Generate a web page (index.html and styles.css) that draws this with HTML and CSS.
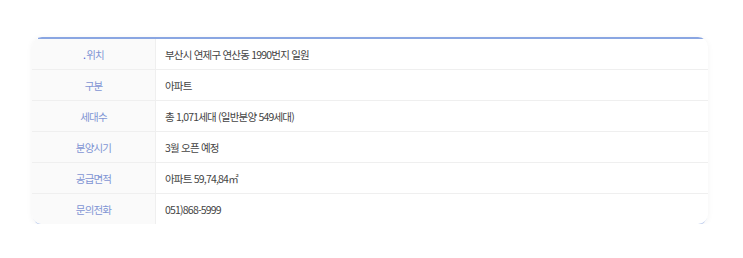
FILE: index.html
```html
<!DOCTYPE html>
<html lang="ko">
<head>
    <meta charset="UTF-8" />
    <meta name="viewport" content="width=device-width, initial-scale=1" />
    <title>사업개요</title>
    <link rel="stylesheet" href="styles.css">
</head>
<body>
    <div class="info-card">
        <table class="info-table">
            <tr>
                <th><span class="dot">.</span>위치</th>
                <td>부산시 연제구 연산동 1990번지 일원</td>
            </tr>
            <tr>
                <th>구분</th>
                <td>아파트</td>
            </tr>
            <tr>
                <th>세대수</th>
                <td>총 1,071세대 (일반분양 549세대)</td>
            </tr>
            <tr>
                <th>분양시기</th>
                <td>3월 오픈 예정</td>
            </tr>
            <tr>
                <th>공급면적</th>
                <td>아파트 59,74,84㎡</td>
            </tr>
            <tr>
                <th>문의전화</th>
                <td>051)868-5999</td>
            </tr>
        </table>
    </div>
</body>
</html>
```

FILE: styles.css
```css
body {
    margin: 0;
    background: #fff;
    font-family: "Noto Sans CJK KR", "Noto Sans", sans-serif;
}
.info-card {
    position: relative;
    margin: 37px 35px 0 32px;
    padding-top: 2px;
    border-radius: 10px;
    background: #fff;
    box-shadow: 0 2px 0 -1px #c3d1ef, 0 1px 6px rgba(0, 0, 0, 0.05);
    overflow: hidden;
}
/* blue rule across the top of the card */
.info-card::before {
    content: "";
    position: absolute;
    top: 0;
    left: 6px;
    right: 3px;
    height: 2px;
    background: #8aa6e2;
}
.info-table {
    width: 100%;
    border-collapse: collapse;
    font-size: 10.5px;
    letter-spacing: -0.8px;
}
.info-table th,
.info-table td {
    height: 30px;
    padding: 0;
    border-top: 1px solid #efefef;
}
.info-table tr:first-child th,
.info-table tr:first-child td {
    border-top: none;
}
.info-table th {
    width: 123px;
    background: #fafafa;
    border-right: 1px solid #efefef;
    color: #7f95d4;
    font-weight: normal;
    text-align: center;
}
.info-table td {
    padding-left: 9px;
    color: #444;
}
.dot {
    color: #4a5fd6;
    margin-right: 1px;
}
```
